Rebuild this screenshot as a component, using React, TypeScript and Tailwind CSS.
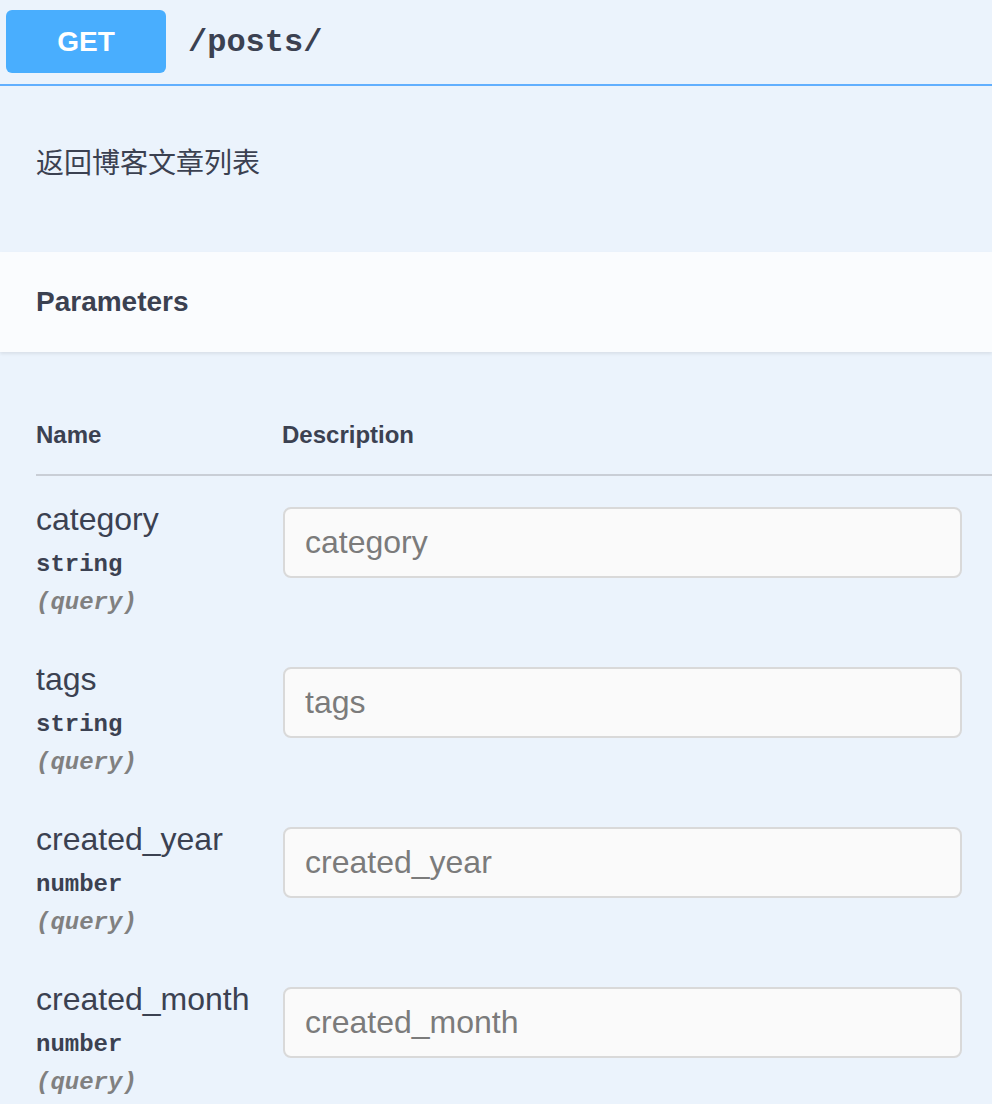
const params = [
  { name: "category", type: "string" },
  { name: "tags", type: "string" },
  { name: "created_year", type: "number" },
  { name: "created_month", type: "number" },
];

const sans = "font-['Liberation_Sans','Noto_Sans_CJK_SC',sans-serif]";
const mono = "font-['Liberation_Mono',monospace]";

export default function App() {
  return (
    <div className={`w-[992px] h-[1104px] overflow-hidden bg-[#ebf3fc] text-[#3b4151] ${sans}`}>
      {/* summary bar */}
      <div className="flex items-start h-[86px] border-b-2 border-[#61affe]">
        <div className="mt-[10px] ml-[6px] w-[160px] h-[63px] rounded-[6px] bg-[#49aefe] flex items-center justify-center text-white text-[28px] font-bold">
          GET
        </div>
        <div className={`ml-[22px] mt-[21px] leading-[44px] text-[32px] font-bold ${mono}`}>/posts/</div>
      </div>

      <div className="px-[36px] pt-[61px] h-[166px] text-[28px] leading-[34px]">返回博客文章列表</div>

      {/* parameters header */}
      <div className="h-[100px] bg-[#fafcfe] shadow-[0_2px_3px_rgba(0,0,0,0.08)] flex items-center px-[36px]">
        <span className="text-[28px] font-bold">Parameters</span>
      </div>

      <div className="pl-[36px]">
        <div className="flex pt-[68px] pb-[24px] border-b-2 border-[#c9ced6] text-[24px] font-bold leading-[30px]">
          <div className="w-[246px]">Name</div>
          <div>Description</div>
        </div>

        <div className="pt-[25px]">
          {params.map((p) => (
            <div key={p.name} className="flex h-[160px]">
              <div className="w-[246px]">
                <div className="text-[32px] leading-[36px]">{p.name}</div>
                <div className={`mt-[9px] text-[24px] font-bold leading-[38px] ${mono}`}>{p.type}</div>
                <div className={`text-[24px] font-bold italic leading-[38px] text-[#808080] ${mono}`}>(query)</div>
              </div>
              <input
                placeholder={p.name}
                className="mt-[6px] ml-[1px] w-[679px] h-[71px] rounded-[8px] border-2 border-[#d9d9d9] bg-[#fafafa] px-[20px] text-[32px] placeholder:text-[#7b7b7b] outline-none"
              />
            </div>
          ))}
        </div>
      </div>
    </div>
  );
}
